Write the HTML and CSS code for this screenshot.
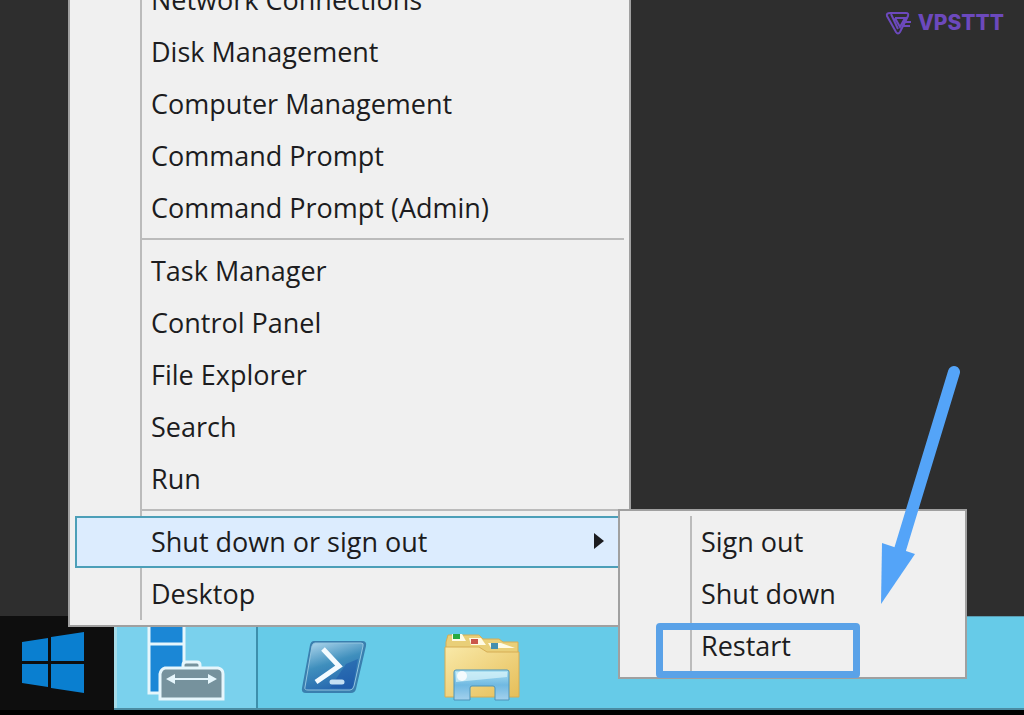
FILE: index.html
```html
<!DOCTYPE html>
<html lang="en">
<head>
	<title>Power User Menu</title>
	<meta charset="UTF-8">
	<meta name="viewport" content="width=device-width, initial-scale=1.0">
	<link rel="stylesheet" href="styles.css">
</head>
<body>
	<main class="desktop">
		<div class="brand">
			<svg width="28" height="26" viewBox="0 0 28 26" aria-hidden="true">
				<path d="M5 3H21Q24 3 23 6L15 22Q13 25 11 22L2 6Q1 3 5 3ZM6 4L13 19M10 8H20L15 17L10 8M17 12H26M17 16H25" />
			</svg>
			<span>VPSTTT</span>
		</div>
	</main>

	<footer class="taskbar">
		<button class="start" aria-label="Start">
			<svg width="64" height="62" viewBox="0 0 64 62">
				<path d="M1 10L27 6V29H1ZM30 5L63 0V29H30ZM1 32H27V55L1 51ZM30 32H63V61L30 56Z" fill="#0a7fd0" />
			</svg>
		</button>
		<div class="tasks">
			<button class="task active" aria-label="Server Manager">
				<svg width="80" height="76" viewBox="0 0 80 76">
					<g stroke="#e6f6fc" stroke-width="3">
						<path d="M4 0H39V68H4Z" fill="#1b87d6" />
						<path d="M4 19H39" />
						<path d="M38 44V40Q38 37 41 37H52Q55 37 55 40V44" fill="#76929d" />
						<path d="M20 43H73Q78 44 78 49V74H15V49Q16 44 20 43Z" fill="#76929d" />
						<path d="M25 54H69" stroke-width="2" />
					</g>
					<path d="M21 54L30 49V59ZM72 54L63 49V59Z" fill="#e6f6fc" />
				</svg>
			</button>
			<button class="task" aria-label="Windows PowerShell">
				<svg width="68" height="56" viewBox="0 0 68 56">
					<defs>
						<linearGradient id="ps" x1="0.2" y1="0" x2="0.6" y2="1">
							<stop offset="0" stop-color="#a4d0e8" />
							<stop offset="0.45" stop-color="#3f8fbd" />
							<stop offset="1" stop-color="#2463ad" />
						</linearGradient>
					</defs>
					<path d="M14 2H62Q67 2 66 7L56 50Q55 54 51 54H6Q1 54 2 49L10 6Q11 2 14 2Z" fill="#3a7fae" />
					<path d="M15 4H61Q64 4 63 7L54 47Q53 51 50 51H8Q4 51 5 48L12 7Q13 4 15 4Z" fill="url(#ps)" stroke="#93c5e0" stroke-width="1" />
					<path d="M46 25L58 20L52 49H30Z" fill="#1c55aa" opacity="0.5" />
					<path d="M23 10L39 27L16 43" fill="none" stroke="#f4fbff" stroke-width="5" />
					<path d="M32 43H42" stroke="#c5e0f3" stroke-width="5" stroke-linecap="round" />
				</svg>
			</button>
			<button class="task" aria-label="File Explorer">
				<svg width="78" height="70" viewBox="0 0 78 70">
					<defs>
						<linearGradient id="folder" x1="0" y1="0" x2="1" y2="1">
							<stop offset="0" stop-color="#f9e9a8" />
							<stop offset="1" stop-color="#e6be58" />
						</linearGradient>
						<linearGradient id="stand" x1="0" y1="0" x2="0" y2="1">
							<stop offset="0" stop-color="#aee2f3" />
							<stop offset="0.5" stop-color="#70b9e2" />
							<stop offset="1" stop-color="#a4d1ed" />
						</linearGradient>
					</defs>
					<path d="M3 64V10L5 3H36L40 7H56L60 10H75V64Z" fill="#e9cf78" stroke="#d6ad54" stroke-width="1" />
					<path d="M9 2H19L23 9H9ZM26 6H38L43 13H28ZM45 11H58L72 16H48Z" fill="#fffbe5" />
					<path d="M10 2H17V7H10Z" fill="#29aa40" />
					<path d="M28 7H35V12H28Z" fill="#ca564b" />
					<path d="M48 11H55V17H48Z" fill="#458fae" />
					<path d="M2 15H36L44 20H76V65H2Z" fill="url(#folder)" stroke="#d6ad54" stroke-width="1" />
					<path d="M11 40Q11 38 13 38H64Q66 38 66 40V68H52V56Q52 54 50 54H29Q27 54 27 56V68H11Z" fill="url(#stand)" stroke="#4d94b9" stroke-width="1" />
					<path d="M13 40H64V45L13 50Z" fill="#d9f4f9" opacity="0.7" />
					<circle cx="19" cy="44" r="5" fill="#fff" opacity="0.8" />
				</svg>
			</button>
		</div>
	</footer>

	<!-- right-click menu of the start button -->
	<ul class="menu">
		<li><button class="item">Network Connections</button></li>
		<li><button class="item">Disk Management</button></li>
		<li><button class="item">Computer Management</button></li>
		<li><button class="item">Command Prompt</button></li>
		<li><button class="item">Command Prompt (Admin)</button></li>
		<li class="separator"></li>
		<li><button class="item">Task Manager</button></li>
		<li><button class="item">Control Panel</button></li>
		<li><button class="item">File Explorer</button></li>
		<li><button class="item">Search</button></li>
		<li><button class="item">Run</button></li>
		<li class="separator"></li>
		<li>
			<button class="item selected" aria-haspopup="true" aria-expanded="true">Shut down or sign out</button>
			<ul class="menu submenu">
				<li><button class="item">Sign out</button></li>
				<li><button class="item">Shut down</button></li>
				<li class="marked"><button class="item">Restart</button></li>
			</ul>
		</li>
		<li><button class="item">Desktop</button></li>
	</ul>

	<svg class="arrow" width="100" height="250" viewBox="0 0 100 250" aria-hidden="true">
		<path d="M84 12L29 193" stroke="#54a4f8" stroke-width="12" stroke-linecap="round" />
		<path d="M12 183L45 194L11 244Z" fill="#54a4f8" />
	</svg>
</body>
</html>
```
FILE: styles.css
```css
*, *::before, *::after {box-sizing: border-box;}
body {
	display: flex;
	flex-direction: column;
	position: relative;
	height: 100vh;
	margin: 0;
	overflow: hidden;
	background-color: #2e2e2e;
	font-family: "Open Sans", "Noto Sans", sans-serif;
}
button {
	margin: 0;
	padding: 0;
	border: 0;
	background: none;
	font: inherit;
	color: inherit;
}
svg {display: block;}

/* desktop */
.desktop {flex: 1;}
.brand {
	display: flex;
	justify-content: flex-end;
	align-items: center;
	gap: 5px;
	padding: 10px 20px;
	color: #6c49bd;
	font: 800 21px/26px Inter, sans-serif;
}
.brand path {
	fill: none;
	stroke: currentColor;
	stroke-width: 2;
}

/* taskbar */
.taskbar {
	display: flex;
	height: 99px;
	border-bottom: 5px solid #000;
	background-color: #0e0e0e;
}
.start {
	display: grid;
	place-items: center;
	width: 114px;
	padding-right: 8px;
}
.tasks {
	display: flex;
	flex: 1;
	gap: 4px;
	border-top: 1px solid #5a9cb2;
	border-bottom: 2px solid #4b8ca3;
	background-color: #66cbe8;
}
.task {
	display: grid;
	place-items: center;
	width: 144px;
	padding-top: 8px;
}
.task.active {
	align-items: start;
	padding-right: 4px;
	border-left: 3px solid #a5dcea;
	border-right: 2px solid #3d8fac;
	background-color: #7ad1ed;
}

/* menus */
.menu {
	--gutter: 70px;
	position: absolute;
	left: 68px;
	bottom: 88px;
	width: 563px;
	margin: 0;
	padding: 5px;
	border: 2px solid #a0a0a0;
	list-style: none;
	color: #1c1c20;
	font-size: 27px;
	line-height: 52px;
	background: linear-gradient(#bbb, #bbb) var(--gutter) 5px / 2px calc(100% - 10px) no-repeat #f0f0f0;
}
.menu li {position: relative;}
.item {
	display: block;
	width: 100%;
	height: 52px;
	padding-left: 76px;
	text-align: left;
}
.item.selected {
	position: relative;
	border: 2px solid #4c9fb8;
	padding-left: 74px;
	line-height: 48px;
	background-color: #dcecfe;
}
.item.selected::after {
	content: "";
	position: absolute;
	right: 18px;
	top: 15px;
	border: 8px solid transparent;
	border-left: 10px solid #1c1c20;
	border-right: 0;
}
.separator {
	height: 11px;
	padding: 4px 0 5px 67px;
}
.separator::before {
	content: "";
	display: block;
	height: 2px;
	background-color: #bbb;
}
.submenu {
	left: 543px;
	top: -7px;
	bottom: auto;
	z-index: 1;
	width: 349px;
}

/* annotations */
.marked::after {
	content: "";
	position: absolute;
	left: 31px;
	top: 3px;
	width: 204px;
	height: 55px;
	border: 7px solid #5aa2e8;
	border-radius: 4px;
}
.arrow {
	position: absolute;
	left: 870px;
	bottom: 105px;
	z-index: 2;
}
```
